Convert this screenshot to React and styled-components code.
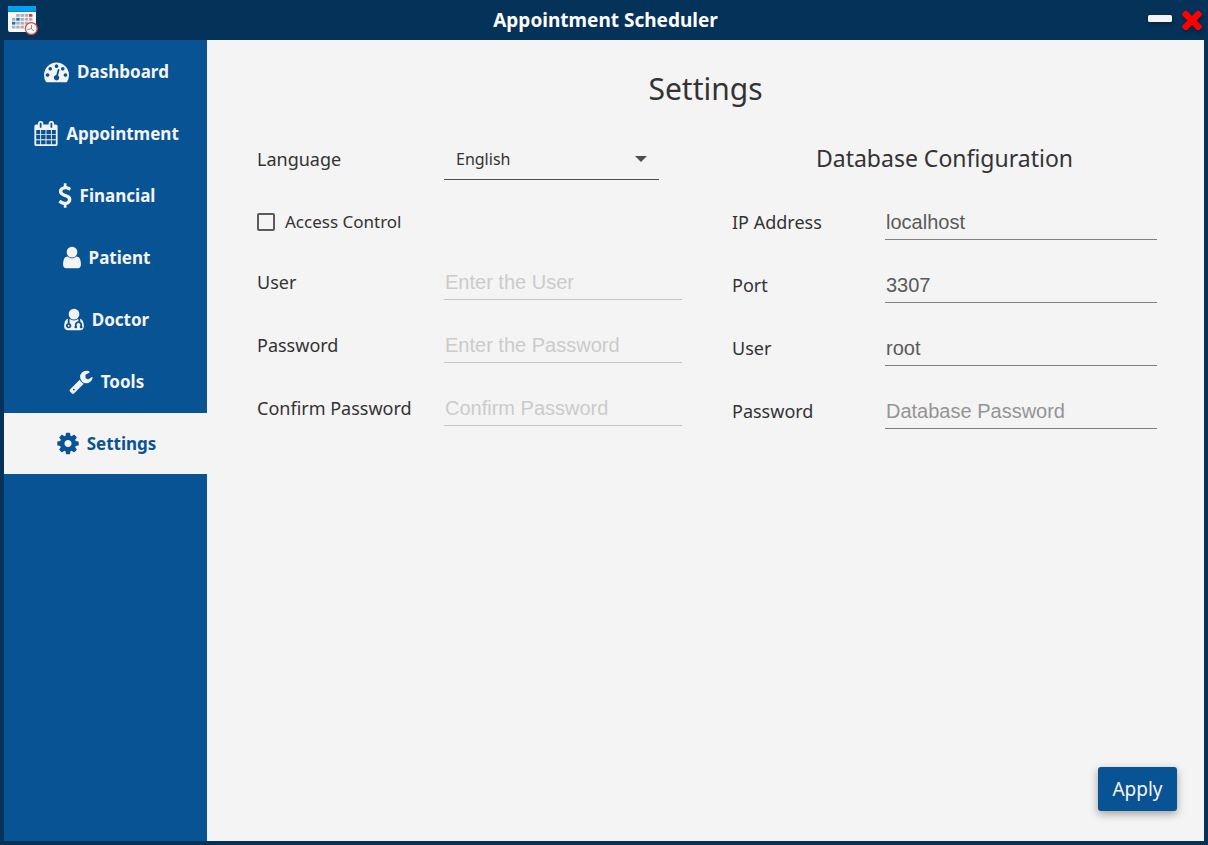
import React from "react";
import styled, { createGlobalStyle, css } from "styled-components";

const colors = {
  navy: "#053259",
  blue: "#085394",
  paper: "#f4f4f4",
  ink: "#333333",
};

const GlobalStyle = createGlobalStyle`
  *, *::before, *::after { box-sizing: border-box; }
  body {
    margin: 0;
    background: ${colors.navy};
    color: ${colors.ink};
    font-family: "Noto Sans", "Open Sans", sans-serif;
  }
`;

const Window = styled.div`
  display: flex;
  flex-direction: column;
  min-height: 100vh;
  padding: 0 4px 4px;
  background: ${colors.navy};
`;

const TitleBar = styled.header`
  display: grid;
  grid-template-columns: 1fr auto 1fr;
  align-items: center;
  height: 40px;
  padding-left: 3px;
`;

const AppTitle = styled.h1`
  margin: 0;
  color: #ffffff;
  font-size: 19px;
  line-height: 24px;
  font-weight: 700;
`;

const WindowControls = styled.div`
  display: flex;
  justify-content: flex-end;
  gap: 10px;
  padding-right: 2px;
`;

const WindowButton = styled.button`
  display: flex;
  align-items: center;
  justify-content: center;
  padding: 0;
  border: 0;
  background: none;
  color: ${(p) => p.$color};
  cursor: pointer;

  svg {
    display: block;
    filter: drop-shadow(1px 2px 2px rgba(0, 0, 0, 0.35));
  }
`;

const Body = styled.div`
  display: flex;
  flex: 1;
`;

const Sidebar = styled.nav`
  display: flex;
  flex-direction: column;
  flex: 0 0 203px;
  gap: 1px;
  padding-top: 1px;
  background: ${colors.blue};
`;

const NavItem = styled.a`
  display: flex;
  align-items: center;
  justify-content: center;
  gap: 8px;
  height: 61px;
  padding-left: 2px;
  color: ${colors.paper};
  font-size: 17px;
  line-height: 24px;
  font-weight: 700;
  text-decoration: none;
  ${(p) =>
    p.$active &&
    css`
      background: ${colors.paper};
      color: ${colors.blue};
    `}

  svg {
    flex: none;
  }
`;

const Main = styled.main`
  display: flex;
  flex: 1;
  flex-direction: column;
  min-width: 0;
  background: ${colors.paper};
`;

const PageTitle = styled.h2`
  margin: 28px 0;
  font-size: 30px;
  line-height: 42px;
  font-weight: 400;
  text-align: center;
`;

const Columns = styled.div`
  display: grid;
  grid-template-columns: 1fr 1fr;
  gap: 50px;
  padding: 0 47px 0 50px;
`;

const Column = styled.section`
  display: flex;
  flex-direction: column;
  gap: 24px;
`;

const SectionTitle = styled.h3`
  margin: 0;
  padding-bottom: 2px;
  font-size: 23px;
  line-height: 40px;
  font-weight: 400;
  text-align: center;
`;

const FieldGroup = styled.div`
  display: flex;
  flex-direction: column;
  gap: 27px;
`;

const FieldRow = styled.div`
  display: grid;
  grid-template-columns: ${(p) => p.$labelWidth}px 1fr;
  align-items: center;
`;

const Label = styled.label`
  font-size: 18px;
  line-height: 28px;
  white-space: nowrap;
`;

const TextInput = styled.input`
  width: 100%;
  height: 36px;
  padding: 2px 1px 0;
  border: 0;
  border-bottom: 1px solid #808080;
  border-radius: 0;
  background: transparent;
  color: #5a5a5a;
  font-family: "Liberation Sans", Arial, sans-serif;
  font-size: 20px;
  outline: none;

  &::placeholder {
    color: #949494;
    opacity: 1;
  }

  &:disabled {
    border-color: #c6c6c6;
  }

  &:disabled::placeholder {
    color: #cbcbcb;
  }
`;

const SelectBox = styled.div`
  position: relative;
  width: 215px;

  svg {
    position: absolute;
    top: 18px;
    right: 12px;
    pointer-events: none;
  }
`;

const Select = styled.select`
  display: block;
  appearance: none;
  width: 100%;
  height: 42px;
  padding: 0 32px 0 12px;
  border: 0;
  border-bottom: 1px solid #4d4d4d;
  border-radius: 0;
  background: transparent;
  color: ${colors.ink};
  font-family: inherit;
  font-size: 16px;
  outline: none;
`;

const CheckRow = styled.label`
  display: flex;
  align-items: center;
  align-self: flex-start;
  gap: 10px;
  height: 36px;
  font-size: 17px;
  line-height: 24px;
`;

const Checkbox = styled.input`
  appearance: none;
  width: 18px;
  height: 18px;
  margin: 0;
  border: 2px solid #5a5a5a;
  border-radius: 2px;

  &:checked {
    border-color: ${colors.blue};
    background: ${colors.blue};
  }
`;

const Actions = styled.footer`
  display: flex;
  justify-content: flex-end;
  margin-top: auto;
  padding: 24px 27px 30px;
`;

const ApplyButton = styled.button`
  min-width: 79px;
  height: 44px;
  padding: 0 14px;
  border: 0;
  border-radius: 3px;
  background: ${colors.blue};
  box-shadow: 0 3px 8px rgba(0, 0, 0, 0.35);
  color: ${colors.paper};
  font-family: inherit;
  font-size: 19px;
  line-height: 24px;
  cursor: pointer;
`;

const glyphs = {
  dashboard: {
    x: 0,
    units: 1792,
    width: 25,
    d: "M384 1152q0-53-37.5-90.5t-90.5-37.5-90.5 37.5-37.5 90.5 37.5 90.5 90.5 37.5 90.5-37.5 37.5-90.5zm192-448q0-53-37.5-90.5t-90.5-37.5-90.5 37.5-37.5 90.5 37.5 90.5 90.5 37.5 90.5-37.5 37.5-90.5zm428 481l101-382q6-26-7.5-48.5t-38.5-29.5-48 6.5-30 39.5l-101 382q-60 5-107 43.5t-63 98.5q-20 77 20 146t117 89 146-20 89-117q16-60-6-117t-72-91zm660-33q0-53-37.5-90.5t-90.5-37.5-90.5 37.5-37.5 90.5 37.5 90.5 90.5 37.5 90.5-37.5 37.5-90.5zm-640-640q0-53-37.5-90.5t-90.5-37.5-90.5 37.5-37.5 90.5 37.5 90.5 90.5 37.5 90.5-37.5 37.5-90.5zm448 192q0-53-37.5-90.5t-90.5-37.5-90.5 37.5-37.5 90.5 37.5 90.5 90.5 37.5 90.5-37.5 37.5-90.5zm320 448q0 261-141 483-19 29-54 29h-1402q-35 0-54-29-141-221-141-483 0-182 71-348t191-286 286-191 348-71 348 71 286 191 191 286 71 348z",
  },
  calendar: {
    x: 64,
    units: 1664,
    width: 24,
    d: "M192 1664h288v-288h-288v288zm352 0h320v-288h-320v288zm-352-352h288v-320h-288v320zm352 0h320v-320h-320v320zm-352-384h288v-288h-288v288zm736 736h320v-288h-320v288zm-384-736h320v-288h-320v288zm768 736h288v-288h-288v288zm-384-352h320v-320h-320v320zm-352-864v-288q0-13-9.5-22.5t-22.5-9.5h-64q-13 0-22.5 9.5t-9.5 22.5v288q0 13 9.5 22.5t22.5 9.5h64q13 0 22.5-9.5t9.5-22.5zm736 864h288v-320h-288v320zm-384-384h320v-288h-320v288zm384 0h288v-288h-288v288zm32-480v-288q0-13-9.5-22.5t-22.5-9.5h-64q-13 0-22.5 9.5t-9.5 22.5v288q0 13 9.5 22.5t22.5 9.5h64q13 0 22.5-9.5t9.5-22.5zm384-64v1280q0 52-38 90t-90 38h-1408q-52 0-90-38t-38-90v-1280q0-52 38-90t90-38h128v-96q0-66 47-113t113-47h64q66 0 113 47t47 113v96h384v-96q0-66 47-113t113-47h64q66 0 113 47t47 113v96h128q52 0 90 38t38 90z",
  },
  dollar: {
    x: 384,
    units: 1024,
    width: 14,
    d: "M1362 1185q0 153-99.5 263.5t-258.5 136.5v175q0 14-9 23t-23 9h-135q-13 0-22.5-9.5t-9.5-22.5v-175q-66-9-127.5-31t-101.5-44.5-74-48-46.5-37.5-17.5-18q-17-21-2-41l103-135q7-10 23-12 15-2 24 9l2 2q113 99 243 125 37 8 74 8 81 0 142.5-43t61.5-122q0-28-15-53t-33.5-42-58.5-37.5-66-32-80-32.5q-39-16-61.5-25t-61.5-26.5-62.5-31-56.5-35.5-53.5-42.5-43.5-49-35.5-58-21-66.5-8.5-78q0-138 98-242t255-134v-180q0-13 9.5-22.5t22.5-9.5h135q14 0 23 9t9 23v176q57 6 110.5 23t87 33.5 63.5 37.5 39 29 15 14q17 18 5 38l-81 146q-8 15-23 16-14 3-27-7-3-3-14.5-12t-39-26.5-58.5-32-74.5-26-85.5-11.5q-95 0-155 43t-60 111q0 26 8.5 48t29.5 41.5 39.5 33 56 31 60.5 27 70 27.5q53 20 81 31.5t76 35 75.5 42.5 62 50 53 63.5 31.5 76.5 13 94z",
  },
  user: {
    x: 256,
    units: 1280,
    width: 18,
    d: "M1536 1399q0 109-62.5 187t-150.5 78h-854q-88 0-150.5-78t-62.5-187q0-85 8.5-160.5t31.5-152 58.5-131 94-89 134.5-34.5q131 128 313 128t313-128q76 0 134.5 34.5t94 89 58.5 131 31.5 152 8.5 160.5zm-256-887q0 159-112.5 271.5t-271.5 112.5-271.5-112.5-112.5-271.5 112.5-271.5 271.5-112.5 271.5 112.5 112.5 271.5z",
  },
  doctor: {
    x: 192,
    units: 1408,
    width: 20,
    d: "M576 1344q0 26-19 45t-45 19-45-19-19-45 19-45 45-19 45 19 19 45zm1024 55q0 121-73 190t-194 69h-874q-121 0-194-69t-73-190q0-68 5.5-131t24-138 47.5-132.500 81-103 120-60.500q-22 52-22 120v203q-58 20-93 70t-35 111q0 80 56 136t136 56 136-56 56-136q0-61-35.500-111t-92.500-70v-203q0-62 25-93 132 104 295 104t295-104q25 31 25 93v64q-106 0-181 75t-75 181v89q-32 29-32 71 0 40 28 68t68 28 68-28 28-68q0-42-32-71v-89q0-52 38-90t90-38 90 38 38 90v89q-32 29-32 71 0 40 28 68t68 28 68-28 28-68q0-42-32-71v-89q0-68-34.500-127.500t-93.500-93.500q0-10 .5-42.500t0-48-2.500-41.500-7-47-13-40q68 15 120 60.500t81 103 47.500 132.500 24 138 5.500 131zm-320-887q0 159-112.500 271.500t-271.500 112.500-271.500-112.500-112.500-271.500 112.500-271.500 271.500-112.500 271.500 112.500 112.500 271.500z",
  },
  wrench: {
    x: 64,
    units: 1664,
    width: 24,
    d: "M448 1472q0-26-19-45t-45-19-45 19-19 45 19 45 45 19 45-19 19-45zm644-420l-682 682q-37 37-90 37-52 0-91-37l-106-108q-38-36-38-90 0-53 38-91l681-681q39 98 114.5 173.5t173.5 114.5zm634-435q0 39-23 106-47 134-164.5 217.5t-258.500 83.500q-185 0-316.500-131.500t-131.500-316.500 131.500-316.500 316.500-131.500q58 0 121.500 16.500t107.500 46.500q16 11 16 28t-16 28l-293 169v224l193 107q5-3 79-48.500t135.500-81 70.500-35.500q15 0 23.500 10t8.500 25z",
  },
  cog: {
    x: 128,
    units: 1536,
    width: 22,
    d: "M1152 896q0-106-75-181t-181-75-181 75-75 181 75 181 181 75 181-75 75-181zm512-109v222q0 12-8 23t-20 13l-185 28q-19 54-39 91 35 50 107 138 10 12 10 25t-9 23q-27 37-99 108t-94 71q-12 0-26-9l-138-108q-44 23-91 38-16 136-29 186-7 28-36 28h-222q-14 0-24.500-8.500t-11.500-21.500l-28-184q-49-16-90-37l-141 107q-10 9-25 9-14 0-25-11-126-114-165-168-7-10-7-23 0-12 8-23 15-21 51-66.500t54-70.500q-27-50-41-99l-183-27q-13-2-21-12.500t-8-23.500v-222q0-12 8-23t19-13l186-28q14-46 39-92-40-57-107-138-10-12-10-24 0-10 9-23 26-36 98.500-107.500t94.500-71.500q13 0 26 10l138 107q44-23 91-38 16-136 29-186 7-28 36-28h222q14 0 24.500 8.500t11.500 21.500l28 184q49 16 90 37l142-107q9-9 24-9 13 0 25 10 129 119 165 170 7 8 7 22 0 12-8 23-15 21-51 66.500t-54 70.500q26 50 41 98l183 28q13 2 21 12.500t8 23.500z",
  },
};

function Glyph({ name }) {
  const g = glyphs[name];
  return (
    <svg
      width={g.width}
      height="25"
      viewBox={`${g.x} 0 ${g.units} 1792`}
      fill="currentColor"
      aria-hidden="true"
    >
      <path d={g.d} />
    </svg>
  );
}

const GREY = "#aeb0b2";
const SKY = "#1277c4";
const RED = "#e0393e";

const logoRows = [
  [null, GREY, GREY, GREY, RED],
  [GREY, SKY, GREY, GREY, GREY],
  [SKY, GREY, GREY, GREY, GREY],
  [GREY, GREY, GREY, null, null],
];

function AppLogo() {
  return (
    <svg width="32" height="32" viewBox="7 4 32 32" aria-hidden="true">
      <rect x="8" y="6" width="28" height="26" rx="2" fill="#f7f9fa" />
      <path d="M8 12V8q0-2 2-2h24q2 0 2 2v4z" fill="#03a0f0" />
      <path d="M8 11h28v1H8z" fill="#0288d1" />
      {logoRows.map((row, r) =>
        row.map(
          (fill, c) =>
            fill && (
              <rect
                key={`${r}-${c}`}
                x={12 + c * 4.25}
                y={14 + r * 3.9}
                width="3.400"
                height="2.800"
                fill={fill}
              />
            )
        )
      )}
      <circle cx="31.300" cy="28.500" r="5.900" fill="#f7f7f7" stroke="#dd4b45" strokeWidth="1.300" />
      <path d="M31.500 25v4l2.500 2M31.500 28.500l-4 1" fill="none" stroke="#8c8c8c" strokeWidth="1" />
    </svg>
  );
}

const navItems = [
  ["Dashboard", "dashboard"],
  ["Appointment", "calendar"],
  ["Financial", "dollar"],
  ["Patient", "user"],
  ["Doctor", "doctor"],
  ["Tools", "wrench"],
  ["Settings", "cog"],
];

const accessFields = [
  { id: "access-user", label: "User", placeholder: "Enter the User" },
  { id: "access-password", label: "Password", placeholder: "Enter the Password", type: "password" },
  { id: "access-confirm", label: "Confirm Password", placeholder: "Confirm Password", type: "password" },
];

const databaseFields = [
  { id: "db-ip", label: "IP Address", defaultValue: "localhost" },
  { id: "db-port", label: "Port", defaultValue: "3307" },
  { id: "db-user", label: "User", defaultValue: "root" },
  { id: "db-password", label: "Password", placeholder: "Database Password", type: "password" },
];

function Field({ id, label, labelWidth, ...input }) {
  return (
    <FieldRow $labelWidth={labelWidth}>
      <Label htmlFor={id}>{label}</Label>
      <TextInput id={id} {...input} />
    </FieldRow>
  );
}

export default function App() {
  return (
    <>
      <GlobalStyle />
      <Window>
        <TitleBar>
          <AppLogo />
          <AppTitle>Appointment Scheduler</AppTitle>
          <WindowControls>
            <WindowButton type="button" aria-label="Minimize" $color="#f4f4f4">
              <svg width="24" height="24" viewBox="0 0 24 24" fill="currentColor">
                <rect x="0" y="7" width="24" height="7" rx="1.500" />
              </svg>
            </WindowButton>
            <WindowButton type="button" aria-label="Close" $color="#ff0000">
              <svg width="20" height="20" viewBox="302 334 1188 1188" fill="currentColor">
                <path d="M1490 1322q0 40-28 68l-136 136q-28 28-68 28t-68-28l-294-294-294 294q-28 28-68 28t-68-28l-136-136q-28-28-28-68t28-68l294-294-294-294q-28-28-28-68t28-68l136-136q28-28 68-28t68 28l294 294 294-294q28-28 68-28t68 28l136 136q28 28 28 68t-28 68l-294 294 294 294q28 28 28 68z" />
              </svg>
            </WindowButton>
          </WindowControls>
        </TitleBar>
        <Body>
          <Sidebar>
            {navItems.map(([name, icon]) => (
              <NavItem
                key={name}
                href={`#${name.toLowerCase()}`}
                $active={name === "Settings"}
                aria-current={name === "Settings" ? "page" : undefined}
              >
                <Glyph name={icon} />
                {name}
              </NavItem>
            ))}
          </Sidebar>
          <Main>
            <PageTitle>Settings</PageTitle>
            <Columns>
              <Column>
                <FieldRow $labelWidth={187}>
                  <Label htmlFor="language">Language</Label>
                  <SelectBox>
                    <Select id="language" defaultValue="English">
                      <option>English</option>
                    </Select>
                    <svg width="12" height="6" viewBox="0 0 12 6" aria-hidden="true">
                      <path d="M0 0h12L6 6z" fill="#4d4d4d" />
                    </svg>
                  </SelectBox>
                </FieldRow>
                <CheckRow>
                  <Checkbox type="checkbox" />
                  Access Control
                </CheckRow>
                <FieldGroup>
                  {accessFields.map((field) => (
                    <Field key={field.id} labelWidth={187} disabled {...field} />
                  ))}
                </FieldGroup>
              </Column>
              <Column>
                <SectionTitle>Database Configuration</SectionTitle>
                <FieldGroup>
                  {databaseFields.map((field) => (
                    <Field key={field.id} labelWidth={153} {...field} />
                  ))}
                </FieldGroup>
              </Column>
            </Columns>
            <Actions>
              <ApplyButton type="button">Apply</ApplyButton>
            </Actions>
          </Main>
        </Body>
      </Window>
    </>
  );
}
